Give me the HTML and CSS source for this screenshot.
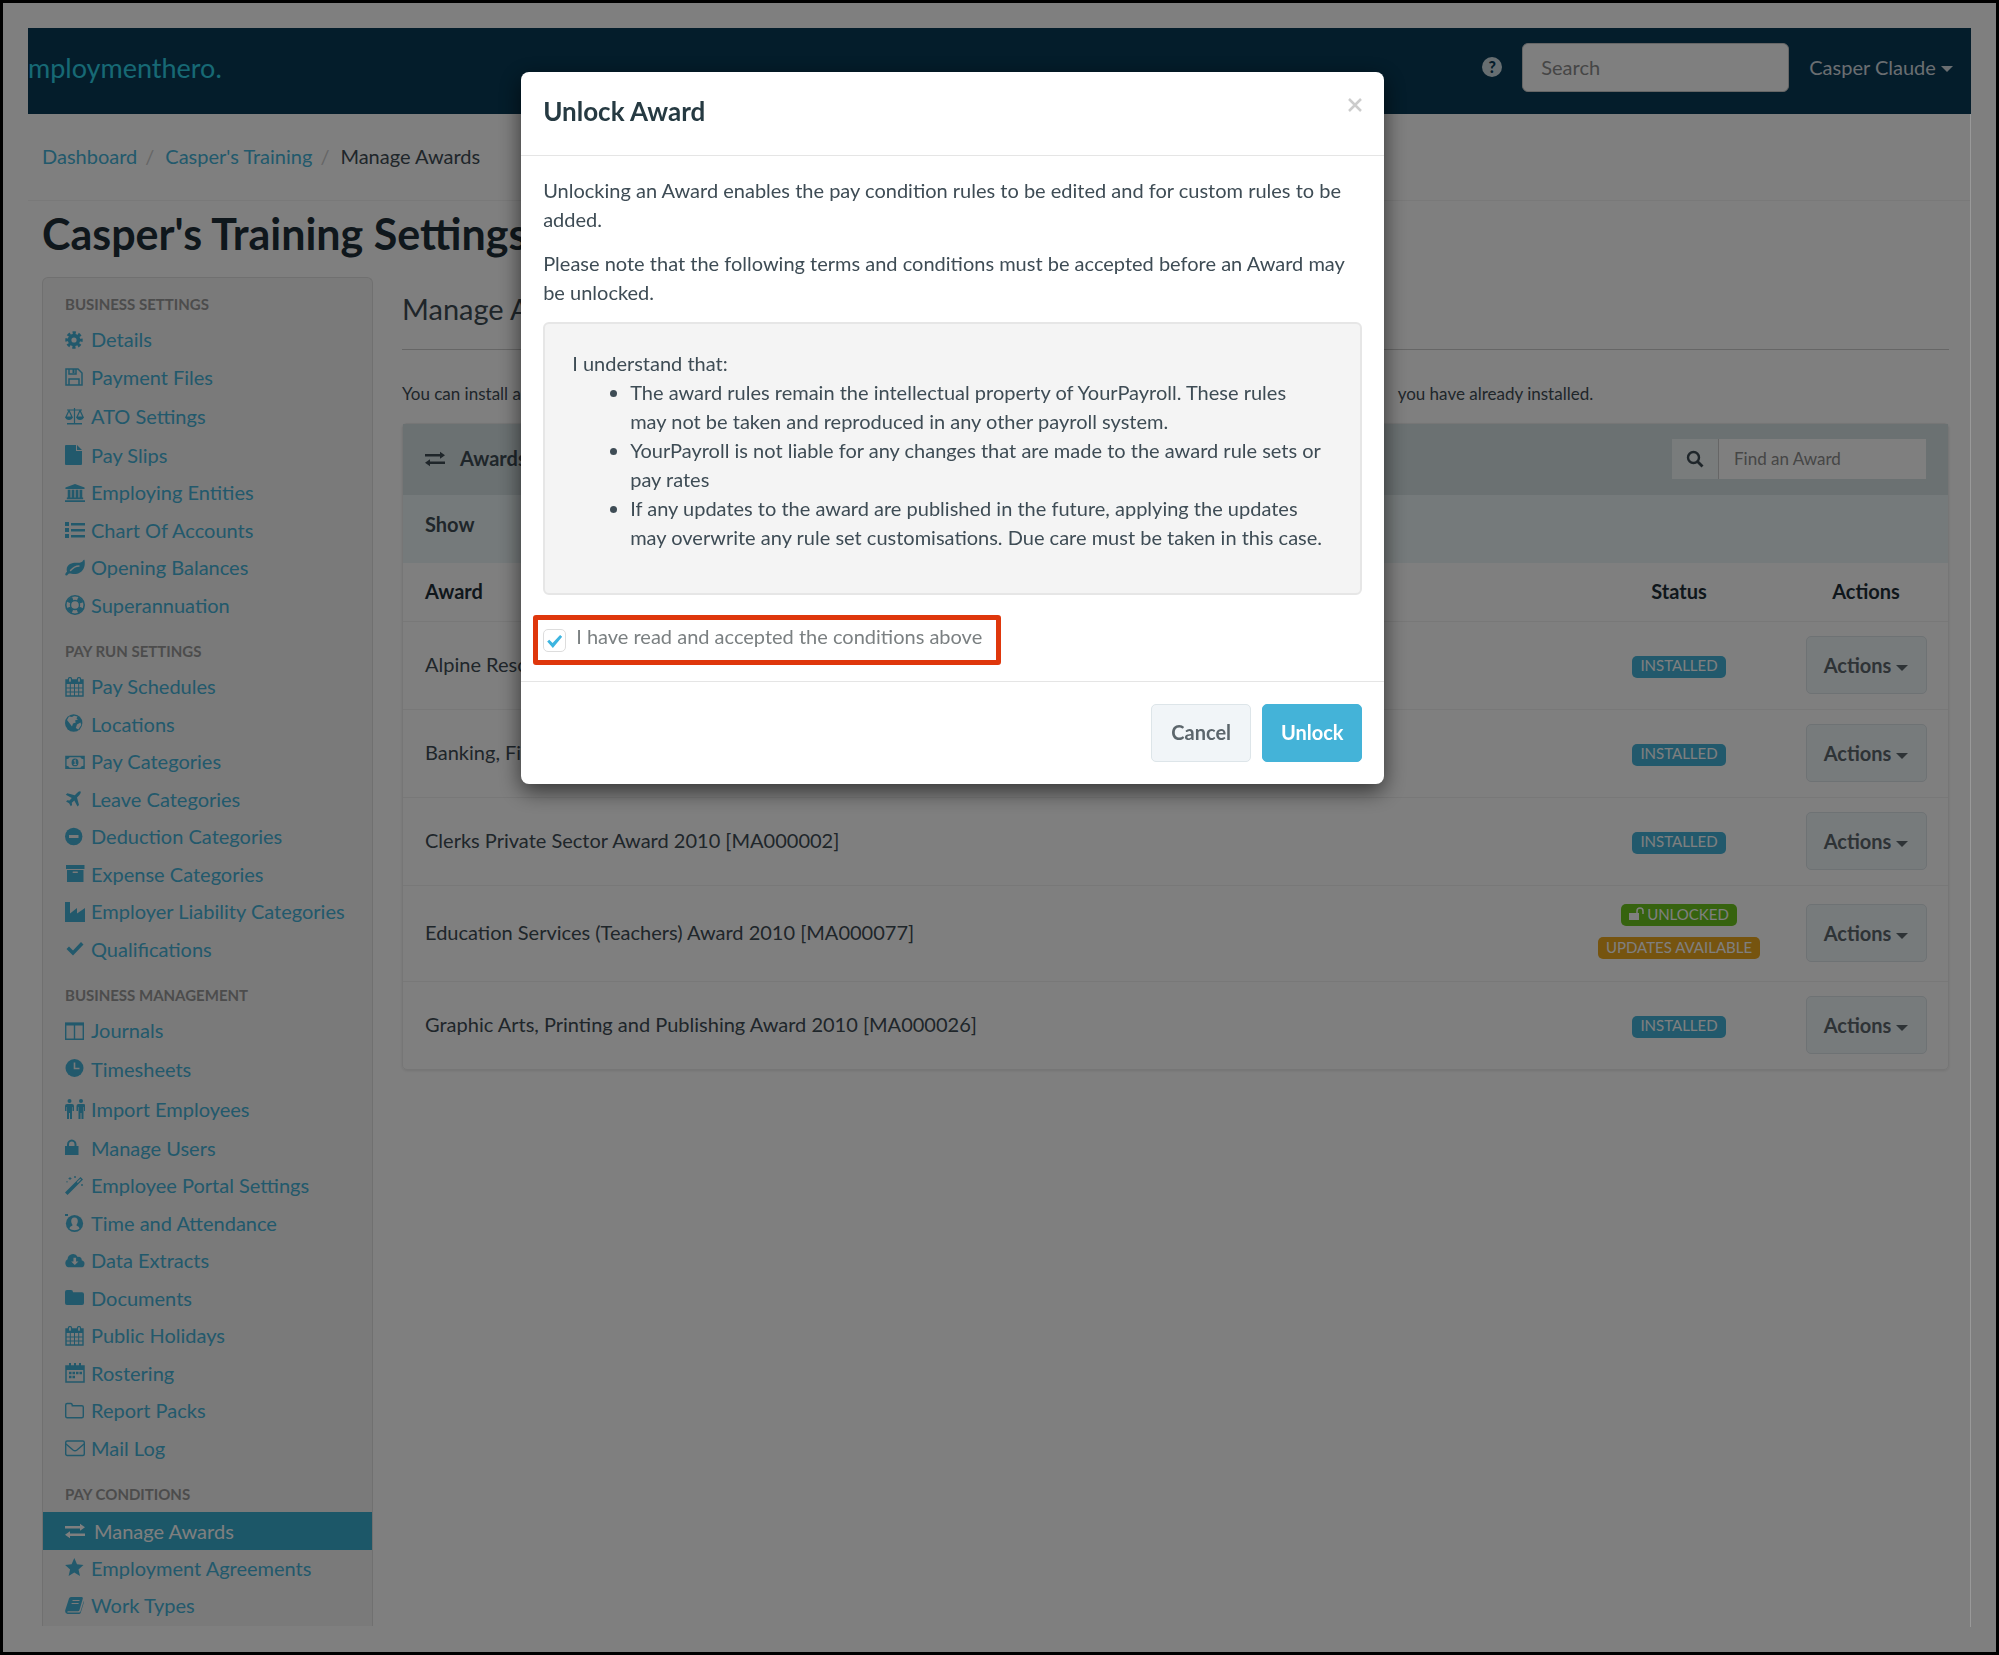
FILE: index.html
```html
<!DOCTYPE html>
<html lang="en">
<head>
    <meta charset="UTF-8">
    <meta name="viewport" content="width=device-width, initial-scale=1.0">
    <title>Manage Awards</title>
    <link rel="stylesheet" href="styles.css">
</head>
<body>
    <!-- Icon set -->
    <svg class="sprite" aria-hidden="true">
        <symbol id="i-cog" viewBox="0 0 20 20"><circle cx="9" cy="10" r="4.4" fill="none" stroke="currentColor" stroke-width="3.6"/><circle cx="9" cy="10" r="7.2" fill="none" stroke="currentColor" stroke-width="3" stroke-dasharray="3.2 2.455" stroke-dashoffset="1.6"/></symbol>
        <symbol id="i-save" viewBox="0 0 20 20"><path d="M1 2h12l4 4v12H1zM4 18v-6h10v6M4 2v5h7V2" fill="none" stroke="currentColor" stroke-width="1.5"/><path d="M7.500 2h2v4h-2z" fill="currentColor"/></symbol>
        <symbol id="i-scale" viewBox="0 0 20 20"><path d="M2 4h15M9.500 2v15M2 17.500h15M4 4.500L1 11h6zM15 4.500L12 11h6z" fill="none" stroke="currentColor" stroke-width="1.200"/><path d="M0 11h8q-1 3-4 3t-4-3zM11 11h8q-1 3-4 3t-4-3zM2 17h15v1.500H2z" fill="currentColor"/></symbol>
        <symbol id="i-file" viewBox="0 0 20 20"><path d="M0 1q0-1 1-1h10v6h6v13q0 1-1 1H1q-1 0-1-1zM12 0l5 5h-5z" fill="currentColor"/></symbol>
        <symbol id="i-bank" viewBox="0 0 22 20"><path d="M11 0l10.500 4v1.500H.5V4zM3 6.500h3V15h1.300V6.500h3V15h1.400V6.500h3V15H16V6.500h3V15h1v2H2v-2h1zM0 18h22v2H0z" fill="currentColor"/></symbol>
        <symbol id="i-list" viewBox="0 0 20 20"><path d="M0 2h4v4H0zM0 8h4v4H0zM0 14h4v4H0zM6 3h14v2.500H6zM6 9h14v2.500H6zM6 15h14v2.500H6z" fill="currentColor"/></symbol>
        <symbol id="i-leaf" viewBox="0 0 20 20"><path d="M19.500 2c1.200 6-1 13-8.500 14-3 .4-5-.6-6.500-.6C3 15.400 2.500 18 1 17.500c-1.800-.8 0-3 1-3.700C0 6 8 4.500 12 4.800c3 .2 5-.4 6-2 .5-.9 1.200-1.400 1.500-.8z" fill="currentColor"/><path d="M5.500 12.500q4-4.500 8.500-4.500" fill="none" stroke="#f4f4f4" stroke-width="1.400" stroke-linecap="round"/></symbol>
        <symbol id="i-ring" viewBox="0 0 20 20"><circle cx="10" cy="10" r="9.200" fill="none" stroke="currentColor" stroke-width="1.600"/><circle cx="10" cy="10" r="4.500" fill="none" stroke="currentColor" stroke-width="1.400"/><circle cx="10" cy="10" r="6.800" fill="none" stroke="currentColor" stroke-width="4" stroke-dasharray="5.680 5" stroke-dashoffset="-2.500"/></symbol>
        <symbol id="i-calendar" viewBox="0 0 20 20"><path d="M1 3h17v16H1z" fill="none" stroke="currentColor" stroke-width="1.400"/><path d="M1 3h17v4H1z" fill="currentColor"/><path d="M5.300 7v12M9.500 7v12M13.700 7v12M1 11h17M1 15h17" stroke="currentColor" stroke-width="1"/><rect x="3.500" y=".7" width="3" height="4.600" rx="1" fill="#f4f4f4" stroke="currentColor" stroke-width="1.200"/><rect x="12.500" y=".7" width="3" height="4.600" rx="1" fill="#f4f4f4" stroke="currentColor" stroke-width="1.200"/></symbol>
        <symbol id="i-globe" viewBox="0 0 20 20"><circle cx="8.700" cy="9" r="8.700" fill="currentColor"/><path d="M4 2.500l3 .5 2-1.200 3.500.8-1 1.800 1.500 1-3 1.200.8 2-2.800.8-1 3L4 8.500 2 6zM12 10.500l3.500-2 .8 2.500-3 4.500-2.500-1.500z" fill="#f4f4f4"/></symbol>
        <symbol id="i-money" viewBox="0 0 22 20"><path d="M1 4h20v13H1z" fill="none" stroke="currentColor" stroke-width="1.500"/><path d="M1 4h4q0 3-4 3zM21 4h-4q0 3 4 3zM1 17h4q0-3-4-3zM21 17h-4q0-3 4-3z" fill="currentColor"/><ellipse cx="11" cy="10.500" rx="3.800" ry="4.300" fill="currentColor"/><path d="M9.700 9l1.500-1v4.500M9.500 12.700h3.300" fill="none" stroke="#f4f4f4" stroke-width="1.200"/></symbol>
        <symbol id="i-plane" viewBox="0 0 20 20"><path d="M15.500 2.500c.8.8-.3 2.700-1.300 3.700L12 8.500l2 7.500-1.500 1.500-3.200-6-2.500 2.300.3 2.200-1.300 1.200-1.700-3-3-1.700 1.200-1.300 2.200.3L6.800 9l-6-3.200L2.300 4.300l7.500 2L12 4c1-1 2.700-2.300 3.500-1.500z" fill="currentColor"/></symbol>
        <symbol id="i-minus" viewBox="0 0 20 20"><circle cx="8.700" cy="9.500" r="8.700" fill="currentColor"/><path d="M4 8h9.500v3H4z" fill="#f4f4f4"/></symbol>
        <symbol id="i-archive" viewBox="0 0 20 20"><path d="M1 1h18.500v4H1zM2 6h16.500v12H2z" fill="currentColor"/><rect x="7.500" y="7.500" width="5.500" height="1.600" rx=".8" fill="#f4f4f4"/></symbol>
        <symbol id="i-industry" viewBox="0 0 20 20"><path d="M0 0h5v11.500l7-5.500v5.500L20 6v14H0z" fill="currentColor"/></symbol>
        <symbol id="i-check" viewBox="0 0 20 20"><path d="M1.500 10l2.500-2.500 4 4L16 3l2.500 2.500L8 16.500z" fill="currentColor"/></symbol>
        <symbol id="i-columns" viewBox="0 0 20 20"><path d="M.7 2.500h17.600v15.800H.7zM9.500 3v15" fill="none" stroke="currentColor" stroke-width="1.400"/><path d="M0 1.500h19v3H0z" fill="currentColor"/></symbol>
        <symbol id="i-clock" viewBox="0 0 20 20"><circle cx="9.500" cy="9" r="9" fill="currentColor"/><path d="M9.500 3.500V9.500h5" fill="none" stroke="#f4f4f4" stroke-width="1.600"/></symbol>
        <symbol id="i-people" viewBox="0 0 20 20"><path d="M0 7q0-2 2-2h5q2 0 2 2v5H7.500V8H7v12H5v-6H4v6H2V8h-.5v4H0zM11.500 7q0-2 2-2h5q2 0 2 2v5H19V8h-.5v12h-2v-6h-1v6h-2V8H13v4h-1.500z" fill="currentColor"/><circle cx="4.500" cy="2" r="2" fill="currentColor"/><circle cx="16" cy="2" r="2" fill="currentColor"/></symbol>
        <symbol id="i-lock" viewBox="0 0 20 20"><path d="M0 8h13.500v9H0z" fill="currentColor"/><path d="M3 9V6.500a3.700 4 0 0 1 7.500 0V9" fill="none" stroke="currentColor" stroke-width="2"/></symbol>
        <symbol id="i-wand" viewBox="0 0 20 20"><path d="M0 16.500L15.500 1 18 3.500 2.500 19z" fill="currentColor"/><path d="M12.300 6.500l3.400-3.400" stroke="#f4f4f4" stroke-width="1.200"/><path d="M5 1v3M3.500 2.500h3M10 0v2M9 1h2M2 5v1.500M17 8v2M16 9h2" stroke="currentColor" stroke-width=".9"/></symbol>
        <symbol id="i-user" viewBox="0 0 20 20"><circle cx="9.500" cy="10.500" r="8.600" fill="currentColor"/><path d="M9.500 4.500c2.600 0 3.300 1.800 3.300 3.800 0 1.800-1 3-1.300 3.700 0 1.200 2.500 1 3 3.500-2 2.300-8 2.300-10 0 .5-2.500 3-2.300 3-3.500-.3-.7-1.300-1.900-1.300-3.700 0-2 .7-3.800 3.300-3.800z" fill="#f4f4f4"/><path d="M0 1h3v2H0z" fill="currentColor"/></symbol>
        <symbol id="i-cloud" viewBox="0 0 22 20"><path d="M5 17a4.700 4.700 0 0 1-2.200-8.800A6 6 0 0 1 14 5.500a3.200 3.200 0 0 1 4.300 3.600A4 4 0 0 1 17.300 17z" fill="currentColor"/><path d="M9.300 6.500h2.900v4h2.600l-4 4-4-4h2.500z" fill="#f4f4f4"/></symbol>
        <symbol id="i-folder" viewBox="0 0 20 20"><path d="M0 4q0-2 2-2h4q2 0 2 2.300h9q2 0 2 2V15q0 2-2 2H2q-2 0-2-2z" fill="currentColor"/></symbol>
        <symbol id="i-roster" viewBox="0 0 20 20"><path d="M1 3h18v16H1z" fill="none" stroke="currentColor" stroke-width="1.500"/><path d="M1 3h18v4H1zM4 0h2v4H4zM9 0h2v4H9zM14 0h2v4h-2z" fill="currentColor"/><path d="M4 10h13M4 14h7" stroke="currentColor" stroke-width="2.600" stroke-dasharray="2.500 1"/></symbol>
        <symbol id="i-folder-o" viewBox="0 0 20 20"><path d="M.7 4q0-1.500 1.500-1.500h3.600q1.500 0 1.500 2.300h9.500q1.500 0 1.500 1.500v8.900q0 1.500-1.500 1.500H2.200q-1.500 0-1.500-1.500z" fill="none" stroke="currentColor" stroke-width="1.400"/></symbol>
        <symbol id="i-mail" viewBox="0 0 20 20"><rect x=".7" y="3" width="18.600" height="14.500" rx="1.500" fill="none" stroke="currentColor" stroke-width="1.400"/><path d="M1 6l7 6q2 1.500 4 0l7-6" fill="none" stroke="currentColor" stroke-width="1.400"/></symbol>
        <symbol id="i-exchange" viewBox="0 0 20 20"><path d="M0 5h15V2.800L20 6.300l-5 3.500V7.500H0zM20 12.500H5v-2.300L0 13.700l5 3.500V15h15z" fill="currentColor"/></symbol>
        <symbol id="i-star" viewBox="0 0 20 20"><path d="M9.300 0l2.700 6.300 6.500.6-5 4.500 1.500 6.600-5.700-3.500L3.600 18l1.500-6.600-5-4.500 6.500-.6z" fill="currentColor"/></symbol>
        <symbol id="i-book" viewBox="0 0 20 20"><path d="M6 1h10.500q1.800 0 1.200 2l-3.200 11q-.4 1.200-1.700 1.200H3q-1 .2-.6 1.300h11.800q1 0 1.400-1.200L18.800 5q.4 0-.1 2l-2.900 9.500Q15.300 18 13.800 18H2.500Q-.5 17.500.3 14L4 2.500Q4.500 1 6 1z" fill="currentColor"/><path d="M7.500 4.500h7M6.600 7.500h7" stroke="#f4f4f4" stroke-width="1.200"/></symbol>
        <symbol id="i-search" viewBox="0 0 20 20"><circle cx="8.500" cy="8.500" r="5.500" fill="none" stroke="currentColor" stroke-width="2.400"/><path d="M12.500 12.500l5 5" stroke="currentColor" stroke-width="2.800"/></symbol>
        <symbol id="i-unlock" viewBox="0 0 16 14"><path d="M0 6h10v7H0z" fill="currentColor"/><path d="M8 6V4a3 3 0 0 1 6 0v3" fill="none" stroke="currentColor" stroke-width="1.500"/></symbol>
    </svg>

    <div class="page">
        <header class="topbar">
            <a href="#" class="logo">mploymenthero.</a>
            <div class="topbar-right">
                <a href="#" class="help" aria-label="Help">?</a>
                <input type="text" class="search" placeholder="Search" aria-label="Search">
                <a href="#" class="account">Casper Claude <i class="caret"></i></a>
            </div>
        </header>

        <nav class="breadcrumb">
            <a href="#">Dashboard</a><span class="sep">/</span>
            <a href="#">Casper's Training</a><span class="sep">/</span>
            <span>Manage Awards</span>
        </nav>

        <h1>Casper's Training Settings</h1>

        <div class="columns">
            <aside class="sidebar">
                <h2>Business Settings</h2>
                <ul class="menu">
                    <li><a href="#"><svg><use href="#i-cog"/></svg>Details</a></li>
                    <li><a href="#"><svg><use href="#i-save"/></svg>Payment Files</a></li>
                    <li class="tall"><a href="#"><svg><use href="#i-scale"/></svg>ATO Settings</a></li>
                    <li><a href="#"><svg><use href="#i-file"/></svg>Pay Slips</a></li>
                    <li><a href="#"><svg><use href="#i-bank"/></svg>Employing Entities</a></li>
                    <li><a href="#"><svg><use href="#i-list"/></svg>Chart Of Accounts</a></li>
                    <li><a href="#"><svg><use href="#i-leaf"/></svg>Opening Balances</a></li>
                    <li><a href="#"><svg><use href="#i-ring"/></svg>Superannuation</a></li>
                </ul>
                <h2>Pay Run Settings</h2>
                <ul class="menu">
                    <li><a href="#"><svg><use href="#i-calendar"/></svg>Pay Schedules</a></li>
                    <li><a href="#"><svg><use href="#i-globe"/></svg>Locations</a></li>
                    <li><a href="#"><svg><use href="#i-money"/></svg>Pay Categories</a></li>
                    <li><a href="#"><svg><use href="#i-plane"/></svg>Leave Categories</a></li>
                    <li><a href="#"><svg><use href="#i-minus"/></svg>Deduction Categories</a></li>
                    <li><a href="#"><svg><use href="#i-archive"/></svg>Expense Categories</a></li>
                    <li><a href="#"><svg><use href="#i-industry"/></svg>Employer Liability Categories</a></li>
                    <li><a href="#"><svg><use href="#i-check"/></svg>Qualifications</a></li>
                </ul>
                <h2>Business Management</h2>
                <ul class="menu">
                    <li><a href="#"><svg><use href="#i-columns"/></svg>Journals</a></li>
                    <li class="tall"><a href="#"><svg><use href="#i-clock"/></svg>Timesheets</a></li>
                    <li class="tall"><a href="#"><svg><use href="#i-people"/></svg>Import Employees</a></li>
                    <li><a href="#"><svg><use href="#i-lock"/></svg>Manage Users</a></li>
                    <li><a href="#"><svg><use href="#i-wand"/></svg>Employee Portal Settings</a></li>
                    <li><a href="#"><svg><use href="#i-user"/></svg>Time and Attendance</a></li>
                    <li><a href="#"><svg><use href="#i-cloud"/></svg>Data Extracts</a></li>
                    <li><a href="#"><svg><use href="#i-folder"/></svg>Documents</a></li>
                    <li><a href="#"><svg><use href="#i-calendar"/></svg>Public Holidays</a></li>
                    <li><a href="#"><svg><use href="#i-roster"/></svg>Rostering</a></li>
                    <li><a href="#"><svg><use href="#i-folder-o"/></svg>Report Packs</a></li>
                    <li><a href="#"><svg><use href="#i-mail"/></svg>Mail Log</a></li>
                </ul>
                <h2>Pay Conditions</h2>
                <ul class="menu">
                    <li class="active"><a href="#"><svg><use href="#i-exchange"/></svg>Manage Awards</a></li>
                    <li><a href="#"><svg><use href="#i-star"/></svg>Employment Agreements</a></li>
                    <li><a href="#"><svg><use href="#i-book"/></svg>Work Types</a></li>
                </ul>
            </aside>

            <main>
                <h3>Manage Awards</h3>
                <p class="intro"><span>You can install a</span><span>you have already installed.</span></p>

                <section class="panel">
                    <div class="panel-head">
                        <svg><use href="#i-exchange"/></svg>
                        <h4>Awards</h4>
                        <div class="find">
                            <button type="button" aria-label="Find"><svg><use href="#i-search"/></svg></button>
                            <input type="text" placeholder="Find an Award" aria-label="Find an Award">
                        </div>
                    </div>
                    <div class="filter">Show</div>
                    <table>
                        <thead>
                            <tr><th>Award</th><th class="status">Status</th><th class="actions">Actions</th></tr>
                        </thead>
                        <tbody>
                            <tr>
                                <td>Alpine Resorts</td>
                                <td class="status"><span class="badge">Installed</span></td>
                                <td class="actions"><button type="button" class="btn">Actions <i class="caret"></i></button></td>
                            </tr>
                            <tr>
                                <td>Banking, Finance</td>
                                <td class="status"><span class="badge">Installed</span></td>
                                <td class="actions"><button type="button" class="btn">Actions <i class="caret"></i></button></td>
                            </tr>
                            <tr>
                                <td>Clerks Private Sector Award 2010 [MA000002]</td>
                                <td class="status"><span class="badge">Installed</span></td>
                                <td class="actions"><button type="button" class="btn">Actions <i class="caret"></i></button></td>
                            </tr>
                            <tr class="double">
                                <td>Education Services (Teachers) Award 2010 [MA000077]</td>
                                <td class="status">
                                    <div class="badges">
                                        <span class="badge green"><svg><use href="#i-unlock"/></svg>Unlocked</span>
                                        <span class="badge orange">Updates available</span>
                                    </div>
                                </td>
                                <td class="actions"><button type="button" class="btn">Actions <i class="caret"></i></button></td>
                            </tr>
                            <tr>
                                <td>Graphic Arts, Printing and Publishing Award 2010 [MA000026]</td>
                                <td class="status"><span class="badge">Installed</span></td>
                                <td class="actions"><button type="button" class="btn">Actions <i class="caret"></i></button></td>
                            </tr>
                        </tbody>
                    </table>
                </section>
            </main>
        </div>
    </div>

    <div class="backdrop">
        <div class="modal" role="dialog" aria-labelledby="modal-title">
            <div class="modal-header">
                <h2 id="modal-title">Unlock Award</h2>
                <button type="button" class="close" aria-label="Close"><svg viewBox="0 0 14 14"><path d="M1 1l12 12M13 1L1 13" stroke="currentColor" stroke-width="2.500"/></svg></button>
            </div>
            <div class="modal-body">
                <p>Unlocking an Award enables the pay condition rules to be edited and for custom rules to be added.</p>
                <p>Please note that the following terms and conditions must be accepted before an Award may be unlocked.</p>
                <div class="well">
                    I understand that:
                    <ul>
                        <li>The award rules remain the intellectual property of YourPayroll. These rules may not be taken and reproduced in any other payroll system.</li>
                        <li>YourPayroll is not liable for any changes that are made to the award rule sets or pay rates</li>
                        <li>If any updates to the award are published in the future, applying the updates may overwrite any rule set customisations. Due care must be taken in this case.</li>
                    </ul>
                </div>
                <label class="accept" for="accept">
                    <input type="checkbox" id="accept" checked>
                    <span>I have read and accepted the conditions above</span>
                </label>
            </div>
            <div class="modal-footer">
                <button type="button" class="btn">Cancel</button>
                <button type="button" class="btn primary">Unlock</button>
            </div>
        </div>
    </div>
</body>
</html>
```
FILE: styles.css
```css
* {
    box-sizing: border-box;
}

body {
    margin: 0;
    padding: 25px;
    min-height: 100vh;
    border: 3px solid #000;
    background-color: #fff;
    font-family: Lato, "Open Sans", sans-serif;
    font-size: 20px;
    line-height: 29px;
    color: #3e4c55;
}

a {
    color: #44b3d8;
    text-decoration: none;
}

h1, h2, h3, h4, p, ul {
    margin: 0;
    padding: 0;
    font-weight: normal;
}

input, button {
    font-family: inherit;
    font-size: 20px;
}

input::placeholder {
    color: #8c8c8c;
    opacity: 1;
}

.sprite {
    position: absolute;
    width: 0;
    height: 0;
}

.caret {
    display: inline-block;
    border: 6px solid transparent;
    border-top-color: currentColor;
    border-bottom: 0;
    vertical-align: middle;
}

/* Top bar */
.topbar {
    display: flex;
    justify-content: space-between;
    align-items: center;
    height: 86px;
    padding: 0 18px 8px 0;
    background-color: #083a56;
}

.logo {
    font-size: 27px;
    color: #2ed2e8;
}

.topbar-right {
    display: flex;
    align-items: center;
    gap: 20px;
}

.help {
    width: 20px;
    height: 20px;
    border-radius: 50%;
    background-color: #cfdde3;
    color: #083a56;
    font-size: 16px;
    font-weight: 900;
    line-height: 20px;
    text-align: center;
}

.search {
    width: 267px;
    height: 49px;
    padding: 0 18px;
    border: 1px solid #ccc;
    border-radius: 6px;
}

.account {
    color: #d5dde2;
}

/* Breadcrumb and title */
.breadcrumb {
    display: flex;
    height: 87px;
    padding: 28px 14px;
    border-bottom: 1px solid #f2f2f2;
}

.breadcrumb .sep {
    width: 28px;
    padding-left: 8px;
    color: #ccc;
}

h1 {
    padding: 8px 14px 18px;
    font-size: 43px;
    font-weight: bold;
    line-height: 50px;
    color: #1f2f38;
}

.columns {
    display: flex;
    align-items: flex-start;
    gap: 29px;
    padding: 0 22px 0 14px;
}

/* Sidebar */
.sidebar {
    width: 331px;
    padding-bottom: 1px;
    border: 1px solid #e0e0e0;
    border-bottom: 0;
    border-radius: 6px 6px 0 0;
    background-color: #f4f4f4;
}

.sidebar h2 {
    padding: 12px 22px 3px;
    font-size: 15px;
    font-weight: bold;
    line-height: 29px;
    text-transform: uppercase;
    color: #999;
}

.menu {
    list-style-type: none;
}

.menu a {
    display: flex;
    align-items: center;
    height: 37px;
    padding: 0 22px 2px;
}

.menu li:nth-child(even) a {
    height: 38px;
}

.menu .tall a, .menu li.tall:nth-child(even) a {
    height: 40px;
}

.menu svg {
    width: 20px;
    height: 20px;
    margin-right: 6px;
}

.menu .active a {
    height: 38px;
    padding-bottom: 0;
    background-color: #38aed0;
    color: #fff;
}

.menu .active svg {
    margin-right: 9px;
}

/* Main content */
main {
    flex: 1;
}

h3 {
    margin-bottom: 29px;
    padding: 13px 0 21px;
    border-bottom: 1px solid #ccc;
    font-size: 29px;
    line-height: 38px;
}

.intro {
    display: flex;
    justify-content: space-between;
    width: 77%;
    margin-bottom: 15px;
    font-size: 17px;
}

.panel {
    border: 1px solid #ececec;
    border-radius: 5px;
    box-shadow: 0 1px 3px rgba(0, 0, 0, 0.1);
}

.panel-head {
    display: flex;
    align-items: center;
    height: 71px;
    padding: 0 22px 2px;
    background-color: #d6e2e4;
}

.panel-head > svg {
    width: 20px;
    height: 20px;
    margin-right: 15px;
}

h4 {
    flex: 1;
    font-weight: bold;
}

.find {
    display: flex;
    height: 40px;
}

.find button {
    width: 47px;
    padding: 4px 0 0;
    border: 0;
    border-right: 1px solid #ccc;
    background-color: #f2f8f9;
    color: #3e4c55;
}

.find button svg {
    width: 20px;
    height: 20px;
}

.find input {
    width: 207px;
    padding: 0 15px;
    border: 0;
    background-color: #fff;
    font-size: 17px;
}

.filter {
    height: 68px;
    padding: 15px 22px;
    background-color: #ebf5f6;
    font-weight: bold;
}

table {
    width: 100%;
    border-collapse: collapse;
}

th {
    height: 58px;
    padding: 0 22px;
    text-align: left;
    color: #1f2f38;
}

td {
    height: 88px;
    padding: 0 22px 2px;
    border-top: 1px solid #f0f0f0;
}

.double td {
    height: 96px;
}

.status {
    width: 210px;
    text-align: center;
}

.actions {
    width: 164px;
    text-align: center;
}

td.actions, th.actions, th.status {
    padding: 0;
}

td.status {
    padding: 0 0 3px;
}

.badge {
    display: inline-flex;
    align-items: center;
    height: 22px;
    padding: 0 8px 2px;
    border-radius: 5px;
    background-color: #44b3d8;
    color: #fff;
    font-size: 15px;
    text-transform: uppercase;
}

.badges {
    display: flex;
    flex-direction: column;
    align-items: center;
    gap: 11px;
}

.badge svg {
    width: 16px;
    height: 14px;
    margin-right: 2px;
}

.green {
    background-color: #6cc71e;
}

.orange {
    background-color: #eca81f;
}

.btn {
    min-width: 100px;
    height: 58px;
    padding: 0 16px 2px;
    border: 1px solid #dde5e9;
    border-radius: 5px;
    background-color: #f1f5f8;
    color: #5c666c;
    font-weight: bold;
}

.btn.primary {
    border-color: #44b3d8;
    background-color: #44b3d8;
    color: #fff;
}

td .btn {
    width: 121px;
    padding: 0;
    background-color: #eff6f8;
}

/* Modal */
.backdrop {
    position: fixed;
    inset: 3px;
    padding-top: 69px;
    background-color: rgba(0, 0, 0, 0.5);
}

/* thin line down the right side of the page */
.backdrop::after {
    content: "";
    position: absolute;
    top: 111px;
    right: 25px;
    bottom: 25px;
    width: 1px;
    background-color: #999;
}

.modal {
    width: 863px;
    margin-left: 26%;
    border-radius: 8px;
    background-color: #fff;
    box-shadow: 0 7px 22px rgba(0, 0, 0, 0.6);
}

.modal-header {
    display: flex;
    justify-content: space-between;
    align-items: flex-start;
    height: 84px;
    padding: 23px 22px;
    border-bottom: 1px solid #e5e5e5;
}

.modal-header h2 {
    font-size: 26px;
    font-weight: bold;
    line-height: 32px;
    color: #263a42;
}

.close {
    width: 14px;
    height: 14px;
    margin-top: 2px;
    padding: 0;
    border: 0;
    background: none;
    color: #ccc;
    line-height: 14px;
}

.modal-body {
    padding: 20px 22px 16px;
}

.modal-body p {
    margin-bottom: 15px;
}

.well {
    margin-bottom: 20px;
    padding: 25px 27px 41px;
    border: 2px solid #e6e6e6;
    border-radius: 6px;
    background-color: #f4f4f4;
}

.well ul {
    padding: 0 9px 0 58px;
}

/* Highlighted consent row */
.accept {
    display: flex;
    width: fit-content;
    height: 50px;
    margin-left: -10px;
    padding: 2px 14px 2px 5px;
    border: 5px solid #df370c;
    border-radius: 3px;
    color: #7b8082;
}

.accept input {
    appearance: none;
    width: 23px;
    height: 23px;
    margin: 7px 10px 0 0;
    border: 1px solid #ddd;
    border-radius: 5px;
}

.accept input:checked::before {
    content: "";
    display: block;
    width: 15px;
    height: 13px;
    margin: 5px 3px;
    background-color: #3db5e0;
    clip-path: polygon(0 50%, 14% 36%, 36% 62%, 86% 0, 100% 14%, 38% 100%);
}

.modal-footer {
    display: flex;
    justify-content: flex-end;
    gap: 11px;
    padding: 22px;
    border-top: 1px solid #e5e5e5;
}
```
